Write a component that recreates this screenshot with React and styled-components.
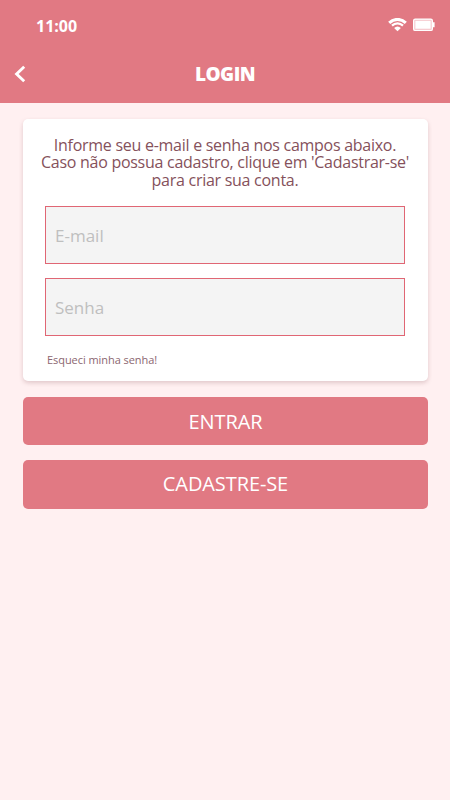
import React from 'react'
import styled, { createGlobalStyle } from 'styled-components'

const GlobalStyle = createGlobalStyle`
    * {
        box-sizing: border-box;
    }

    body {
        margin: 0;
        background: #fff0f1;
        font-family: "Open Sans", "Noto Sans", sans-serif;
    }
`;

const Screen = styled.div`
    display: flex;
    flex-direction: column;
    min-height: 800px;
    background: #fff0f1;
`;

const Header = styled.header`
    height: 103px;
    background: #e17983;
    color: #fff;
`;

const StatusBar = styled.div`
    display: flex;
    justify-content: space-between;
    height: 50px;
    padding: 14px 15px 0 36px;
`;

const Clock = styled.span`
    font-size: 16px;
    font-weight: 700;
    line-height: 24px;
`;

const StatusIcons = styled.div`
    display: flex;
    gap: 6px;
    padding-top: 4px;
`;

const TitleBar = styled.div`
    display: grid;
    grid-template-columns: 40px 1fr 40px;
    align-items: center;
    height: 48px;
`;

const BackButton = styled.button`
    display: flex;
    padding: 0 0 0 14px;
    border: 0;
    background: none;
    cursor: pointer;
`;

const Title = styled.h1`
    margin: 0;
    font-size: 19px;
    font-weight: 800;
    line-height: 24px;
    letter-spacing: -0.5px;
    text-align: center;
`;

const Content = styled.main`
    display: flex;
    flex-direction: column;
    padding: 16px 22px 0 23px;
`;

const Card = styled.section`
    display: flex;
    flex-direction: column;
    height: 262px;
    margin-bottom: 16px;
    padding: 18px 23px 0 22px;
    border-radius: 5px;
    background: #fff;
    box-shadow: 0 2px 4px rgba(120, 60, 70, 0.22);
`;

const Message = styled.p`
    margin: 0 -20px 17px;
    color: #85515b;
    font-size: 16px;
    line-height: 17.4px;
    letter-spacing: -0.27px;
    text-align: center;
    white-space: nowrap;
`;

const Field = styled.input`
    width: 100%;
    height: 58px;
    margin-bottom: 14px;
    padding: 1px 9px 0;
    border: 1px solid #e06674;
    border-radius: 0;
    outline: none;
    background: #f4f4f4;
    color: #85515b;
    font-family: inherit;
    font-size: 17px;

    &::placeholder {
        color: #bfbfbf;
        opacity: 1;
    }
`;

const ForgotLink = styled.a`
    align-self: flex-start;
    margin-left: 2px;
    color: #8b6670;
    font-size: 11px;
    line-height: 20px;
    letter-spacing: -0.06px;
    cursor: pointer;
`;

const Button = styled.button`
    height: ${props => props.$height};
    margin-bottom: 15px;
    padding: 0;
    border: 0;
    border-radius: 5px;
    background: #e17983;
    color: #fff;
    font-family: inherit;
    font-size: 20px;
    line-height: 27px;
    letter-spacing: -0.1px;
    cursor: pointer;
`;

const RegisterButton = styled(Button)`
    padding-bottom: 2px;
`;

const WifiIcon = () => (
    <svg width="19" height="14" viewBox="0 0 19 14" fill="none" stroke="#fff">
        <path d="M1.2 4.9C6 0.2 13 0.2 17.8 4.9" strokeWidth="3" />
        <path d="M4 7.7C7.2 4.7 11.8 4.7 15 7.7" strokeWidth="2.3" />
        <path d="M6.1 9.9C8.2 7.9 10.8 7.9 12.9 9.9L9.5 13.3Z" fill="#fff" stroke="none" />
    </svg>
)

const BatteryIcon = () => (
    <svg width="22" height="14" viewBox="0 0 22 14" fill="none">
        <rect x="0.6" y="1.1" width="18.8" height="11.4" rx="1.6" fill="#f6ccd1" stroke="#fff" strokeWidth="1.2" />
        <rect x="2.4" y="2.9" width="15.2" height="7.8" fill="#fff" />
        <path d="M20 4.3h1.6v5H20z" fill="#fff" />
    </svg>
)

const BackIcon = () => (
    <svg width="12" height="18" viewBox="0 0 12 18" fill="none">
        <path d="M10.2 1.8L2.6 9L10.2 16.2" stroke="#fff" strokeWidth="2.9" />
    </svg>
)

const App = () => {
    return(
        <>
        <GlobalStyle />
        <Screen>
            <Header>
                <StatusBar>
                    <Clock>11:00</Clock>
                    <StatusIcons>
                        <WifiIcon />
                        <BatteryIcon />
                    </StatusIcons>
                </StatusBar>
                <TitleBar>
                    <BackButton aria-label="Voltar"><BackIcon /></BackButton>
                    <Title>LOGIN</Title>
                </TitleBar>
            </Header>
            <Content>
                <Card>
                    <Message>
                        Informe seu e-mail e senha nos campos abaixo.<br />
                        Caso não possua cadastro, clique em 'Cadastrar-se'<br />
                        para criar sua conta.
                    </Message>
                    <Field type="email" placeholder="E-mail" />
                    <Field type="password" placeholder="Senha" />
                    <ForgotLink>Esqueci minha senha!</ForgotLink>
                </Card>
                <Button $height="48px">ENTRAR</Button>
                <RegisterButton $height="49px">CADASTRE-SE</RegisterButton>
            </Content>
        </Screen>
        </>
    )
}

export default App
